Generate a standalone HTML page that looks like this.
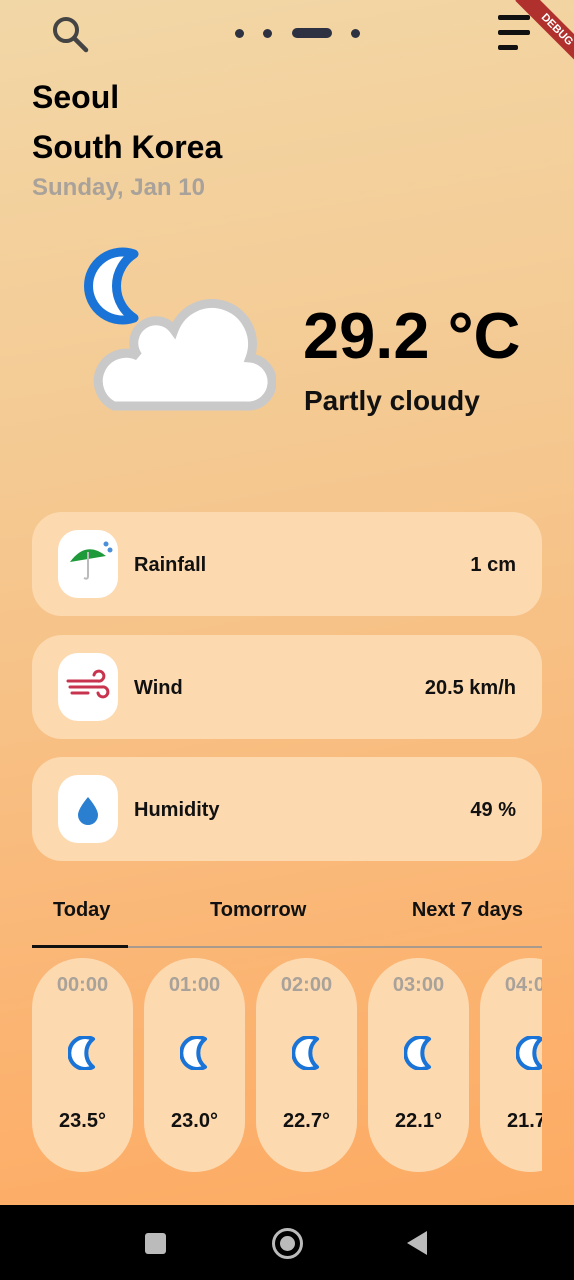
<!DOCTYPE html>
<html><head><meta charset="utf-8"><style>
*{margin:0;padding:0;box-sizing:border-box}
body{width:574px;height:1280px;overflow:hidden;font-family:"Liberation Sans",sans-serif;background:linear-gradient(170deg,#f2d7a6 0%,#f5c78f 40%,#fbb472 75%,#fda85e 100%);position:relative}
.a{position:absolute}
.card{position:absolute;left:32px;width:510px;height:104px;border-radius:30px;background:#fdd9b0}
.ic{position:absolute;left:26px;top:18px;width:60px;height:68px;border-radius:20px;background:#fff}
.lb{position:absolute;left:102px;top:42px;font-size:20px;font-weight:bold;color:#111}
.vl{position:absolute;right:26px;top:42px;font-size:20px;font-weight:bold;color:#111}
.hr{position:absolute;top:958px;width:101px;height:214px;border-radius:50px;background:#fdd9b0;text-align:center}
.hr .t{margin-top:16px;font-size:20px;font-weight:bold;color:#a9a29a}
.hr .m{margin-top:39px;height:34px}
.hr .d{margin-top:40px;font-size:20px;font-weight:bold;color:#111}
</style></head><body>
<svg class="a" style="left:50px;top:14px" width="42" height="40" viewBox="0 0 42 40"><circle cx="16" cy="16" r="11" fill="none" stroke="#444" stroke-width="4"/><line x1="24" y1="24" x2="36" y2="36" stroke="#444" stroke-width="4.5" stroke-linecap="round"/></svg>
<div class="a" style="left:235px;top:29px;width:9px;height:9px;border-radius:5px;background:#2d3142"></div>
<div class="a" style="left:263px;top:29px;width:9px;height:9px;border-radius:5px;background:#2d3142"></div>
<div class="a" style="left:292px;top:28px;width:40px;height:10px;border-radius:5px;background:#2d3142"></div>
<div class="a" style="left:351px;top:29px;width:9px;height:9px;border-radius:5px;background:#2d3142"></div>
<div class="a" style="left:498px;top:15px;width:32px;height:5px;background:#111;border-radius:2px"></div>
<div class="a" style="left:498px;top:30px;width:32px;height:5px;background:#111;border-radius:2px"></div>
<div class="a" style="left:498px;top:45px;width:20px;height:5px;background:#111;border-radius:2px"></div>
<div class="a" style="width:100px;height:18px;background:#b0302d;transform:rotate(45deg);transform-origin:0 0;left:528px;top:-12px;color:#fff;font-size:11px;font-weight:bold;text-align:center;line-height:18px">DEBUG</div>
<div class="a" style="left:32px;top:79px;font-size:32px;font-weight:bold;color:#000">Seoul</div>
<div class="a" style="left:32px;top:129px;font-size:32px;font-weight:bold;color:#000">South Korea</div>
<div class="a" style="left:32px;top:174px;font-size:24px;font-weight:bold;color:#a9a29a">Sunday, Jan 10</div>
<svg class="a" style="left:76px;top:244px" width="200" height="172" viewBox="0 0 200 172">
<path d="M58 10 A34 34 0 1 0 58 74 A38 38 0 0 1 58 10Z" fill="#fff" stroke="#1a73d6" stroke-width="9" stroke-linejoin="round"/>
<path d="M38 162 H170 A24 24 0 0 0 174 114 A40 40 0 0 0 98 86 A22 22 0 0 0 62 112 A26 26 0 0 0 38 162Z" fill="#fff" stroke="#c9c9c9" stroke-width="9"/>
</svg>
<div class="a" style="left:303px;top:298px;font-size:65px;font-weight:bold;color:#000">29.2 °C</div>
<div class="a" style="left:304px;top:385px;font-size:28px;font-weight:bold;color:#111">Partly cloudy</div>
<div class="card" style="top:512px"><div class="ic"><svg width="60" height="68" viewBox="0 0 60 68"><path d="M12 32 Q28 10 48 26 Z" fill="#1e9a3a"/><path d="M30 22 V46 Q30 50 26 48" stroke="#bbb" stroke-width="2" fill="none"/><circle cx="48" cy="14" r="2.5" fill="#4a8fd8"/><circle cx="52" cy="20" r="2.5" fill="#4a8fd8"/></svg></div><div class="lb">Rainfall</div><div class="vl">1 cm</div></div>
<div class="card" style="top:635px"><div class="ic"><svg width="60" height="68" viewBox="0 0 60 68"><g stroke="#c8344e" stroke-width="3" fill="none" stroke-linecap="round"><path d="M10 28 H40 A5 5 0 1 0 36 22"/><path d="M12 34 H44 A5 5 0 1 1 40 40"/><path d="M14 40 H30"/></g></svg></div><div class="lb">Wind</div><div class="vl">20.5 km/h</div></div>
<div class="card" style="top:757px"><div class="ic"><svg width="60" height="68" viewBox="0 0 60 68"><path d="M30 22 Q40 34 40 40 A10 10 0 0 1 20 40 Q20 34 30 22Z" fill="#2a7fd0"/></svg></div><div class="lb">Humidity</div><div class="vl">49 %</div></div>
<div class="a" style="left:53px;top:899px;font-size:20px;font-weight:bold;color:#111">Today</div>
<div class="a" style="left:210px;top:899px;font-size:20px;font-weight:bold;color:#111">Tomorrow</div>
<div class="a" style="right:51px;top:899px;font-size:20px;font-weight:bold;color:#111">Next 7 days</div>
<div class="a" style="left:32px;top:946px;width:510px;height:2px;background:#a89a8c"></div>
<div class="a" style="left:32px;top:945px;width:96px;height:3px;background:#111"></div>
<div class="a" style="left:0;top:950px;width:542px;height:240px;overflow:hidden">
<div class="hr" style="left:32px;top:8px"><div class="t">00:00</div><div class="m"><svg width="30" height="34" viewBox="0 0 30 34"><path d="M25 3 A16 16 0 1 0 25 31 A18 18 0 0 1 25 3Z" fill="#fff" stroke="#1a73d6" stroke-width="4" stroke-linejoin="round"/></svg></div><div class="d">23.5°</div></div>
<div class="hr" style="left:144px;top:8px"><div class="t">01:00</div><div class="m"><svg width="30" height="34" viewBox="0 0 30 34"><path d="M25 3 A16 16 0 1 0 25 31 A18 18 0 0 1 25 3Z" fill="#fff" stroke="#1a73d6" stroke-width="4" stroke-linejoin="round"/></svg></div><div class="d">23.0°</div></div>
<div class="hr" style="left:256px;top:8px"><div class="t">02:00</div><div class="m"><svg width="30" height="34" viewBox="0 0 30 34"><path d="M25 3 A16 16 0 1 0 25 31 A18 18 0 0 1 25 3Z" fill="#fff" stroke="#1a73d6" stroke-width="4" stroke-linejoin="round"/></svg></div><div class="d">22.7°</div></div>
<div class="hr" style="left:368px;top:8px"><div class="t">03:00</div><div class="m"><svg width="30" height="34" viewBox="0 0 30 34"><path d="M25 3 A16 16 0 1 0 25 31 A18 18 0 0 1 25 3Z" fill="#fff" stroke="#1a73d6" stroke-width="4" stroke-linejoin="round"/></svg></div><div class="d">22.1°</div></div>
<div class="hr" style="left:480px;top:8px"><div class="t">04:00</div><div class="m"><svg width="30" height="34" viewBox="0 0 30 34"><path d="M25 3 A16 16 0 1 0 25 31 A18 18 0 0 1 25 3Z" fill="#fff" stroke="#1a73d6" stroke-width="4" stroke-linejoin="round"/></svg></div><div class="d">21.7°</div></div>
</div>
<div class="a" style="left:0;top:1205px;width:574px;height:75px;background:#000"></div>
<div class="a" style="left:145px;top:1233px;width:21px;height:21px;border-radius:3px;background:#bbb"></div>
<div class="a" style="left:272px;top:1228px;width:31px;height:31px;border-radius:50%;border:3px solid #bbb"></div>
<div class="a" style="left:280px;top:1236px;width:15px;height:15px;border-radius:50%;background:#bbb"></div>
<svg class="a" style="left:405px;top:1230px" width="24" height="26" viewBox="0 0 24 26"><path d="M22 1 V25 L2 13Z" fill="#bbb"/></svg>
</body></html>
